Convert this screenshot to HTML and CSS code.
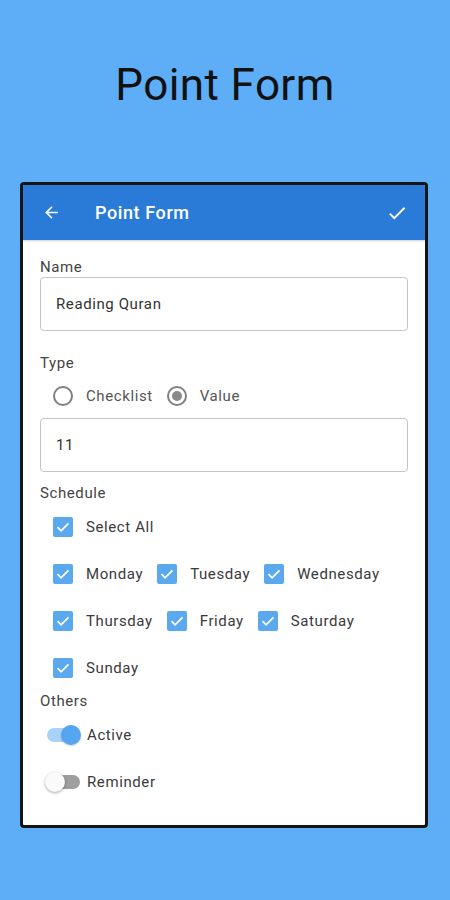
FILE: index.html
```html
<!DOCTYPE html>
<html>
<head>
<meta charset="utf-8">
<link rel="stylesheet" href="styles.css">
</head>
<body>
<h1 class="title">Point Form</h1>
<div class="frame">
  <div class="appbar">
    <svg class="back" viewBox="0 0 24 24"><path d="M20 11H7.83l5.59-5.59L12 4l-8 8 8 8 1.41-1.41L7.83 13H20v-2z" fill="#fff"/></svg>
    <span class="appbar-title">Point Form</span>
    <svg class="done" viewBox="0 0 24 24"><path d="M9 16.17L4.83 12l-1.42 1.41L9 19 21 7l-1.41-1.41z" fill="#fff"/></svg>
  </div>
  <div class="content">
    <div class="label first">Name</div>
    <div class="input">Reading Quran</div>
    <div class="label type">Type</div>
    <div class="radios">
      <span class="radio"></span><span class="rlabel">Checklist</span>
      <span class="radio on"></span><span class="rlabel">Value</span>
    </div>
    <div class="input value">11</div>
    <div class="label schedule">Schedule</div>
    <div class="row">
      <span class="cb"><svg viewBox="0 0 20 20"><path d="M4.5 10.2l3.6 3.6 7.4-7.4" fill="none" stroke="#fff" stroke-width="1.8"/></svg></span><span class="clabel">Select All</span>
    </div>
    <div class="row">
      <span class="cb"><svg viewBox="0 0 20 20"><path d="M4.5 10.2l3.6 3.6 7.4-7.4" fill="none" stroke="#fff" stroke-width="1.8"/></svg></span><span class="clabel">Monday</span>
      <span class="cb"><svg viewBox="0 0 20 20"><path d="M4.5 10.2l3.6 3.6 7.4-7.4" fill="none" stroke="#fff" stroke-width="1.8"/></svg></span><span class="clabel">Tuesday</span>
      <span class="cb"><svg viewBox="0 0 20 20"><path d="M4.5 10.2l3.6 3.6 7.4-7.4" fill="none" stroke="#fff" stroke-width="1.8"/></svg></span><span class="clabel">Wednesday</span>
    </div>
    <div class="row">
      <span class="cb"><svg viewBox="0 0 20 20"><path d="M4.5 10.2l3.6 3.6 7.4-7.4" fill="none" stroke="#fff" stroke-width="1.8"/></svg></span><span class="clabel">Thursday</span>
      <span class="cb"><svg viewBox="0 0 20 20"><path d="M4.5 10.2l3.6 3.6 7.4-7.4" fill="none" stroke="#fff" stroke-width="1.8"/></svg></span><span class="clabel">Friday</span>
      <span class="cb"><svg viewBox="0 0 20 20"><path d="M4.5 10.2l3.6 3.6 7.4-7.4" fill="none" stroke="#fff" stroke-width="1.8"/></svg></span><span class="clabel">Saturday</span>
    </div>
    <div class="row">
      <span class="cb"><svg viewBox="0 0 20 20"><path d="M4.5 10.2l3.6 3.6 7.4-7.4" fill="none" stroke="#fff" stroke-width="1.8"/></svg></span><span class="clabel">Sunday</span>
    </div>
    <div class="label others">Others</div>
    <div class="srow">
      <span class="switch on"><span class="track"></span><span class="thumb"></span></span><span class="slabel">Active</span>
    </div>
    <div class="srow">
      <span class="switch"><span class="track"></span><span class="thumb"></span></span><span class="slabel">Reminder</span>
    </div>
  </div>
</div>
</body>
</html>
```

FILE: styles.css
```css
* { box-sizing: border-box; }
html, body { margin: 0; padding: 0; }
body {
  background: #5eaef7;
  font-family: Roboto, "Noto Sans", sans-serif;
  width: 450px;
  height: 900px;
  overflow: hidden;
}
.title {
  margin: 0;
  padding-top: 60px;
  height: 110px;
  line-height: 50px;
  font-size: 44px;
  font-weight: 400;
  letter-spacing: 0.4px;
  text-align: center;
  color: #111;
}
.frame {
  margin: 72px 22px 0 20px;
  height: 646px;
  border: 3px solid #141414;
  border-radius: 4px;
  background: #fff;
  overflow: hidden;
}
.appbar {
  height: 55px;
  background: #2a7bd8;
  display: flex;
  align-items: center;
  padding: 0 17px 0 19px;
  box-shadow: 0 1px 2px rgba(0,0,0,0.2);
}
.back { width: 19px; height: 19px; }
.appbar-title {
  margin-left: 34px;
  color: #fff;
  font-size: 18px;
  font-weight: 500;
  letter-spacing: 0.6px;
  flex: 1;
}
.done { width: 22px; height: 22px; }
.content {
  padding: 0 17px;
  color: #3a3a3a;
  font-size: 15px;
  letter-spacing: 0.6px;
}
.label {
  height: 20px;
  line-height: 20px;
  color: #444;
}
.label.first { margin-top: 17px; }
.label.type { margin-top: 22px; }
.label.schedule { margin-top: 11px; }
.input {
  height: 54px;
  border: 1px solid #c4c4c4;
  border-radius: 4px;
  display: flex;
  align-items: center;
  padding-left: 15px;
  color: #333;
}
.input.value { margin-top: 10px; }
.radios {
  margin-top: 11px;
  height: 24px;
  display: flex;
  align-items: center;
  padding-left: 13px;
}
.radio {
  width: 20px;
  height: 20px;
  border: 2px solid #808080;
  border-radius: 50%;
  position: relative;
  flex: none;
}
.radio.on::after {
  content: "";
  position: absolute;
  left: 3px;
  top: 3px;
  width: 10px;
  height: 10px;
  border-radius: 50%;
  background: #8a8a8a;
}
.rlabel { margin-left: 13px; margin-right: 14px; color: #555; }
.row {
  height: 47px;
  display: flex;
  align-items: center;
  padding-left: 13px;
}
.cb {
  width: 20px;
  height: 20px;
  border-radius: 2px;
  background: #5aa8ee;
  flex: none;
  display: flex;
}
.cb svg { width: 20px; height: 20px; }
.clabel { margin-left: 13px; margin-right: 14px; }
.srow {
  height: 47px;
  display: flex;
  align-items: center;
  padding-left: 5px;
}
.switch {
  position: relative;
  width: 36px;
  height: 20px;
  flex: none;
}
.switch .track {
  position: absolute;
  left: 2px;
  top: 3px;
  width: 33px;
  height: 14px;
  border-radius: 7px;
  background: #9e9e9e;
}
.switch .thumb {
  position: absolute;
  left: 0;
  top: 0;
  width: 20px;
  height: 20px;
  border-radius: 50%;
  background: #fafafa;
  box-shadow: 0 1px 3px rgba(0,0,0,0.35);
}
.switch.on .track { background: #a8d2f8; }
.switch.on .thumb { left: 16px; background: #55a6f0; box-shadow: 0 1px 2px rgba(0,0,0,0.2); }
.slabel { margin-left: 6px; }
```
